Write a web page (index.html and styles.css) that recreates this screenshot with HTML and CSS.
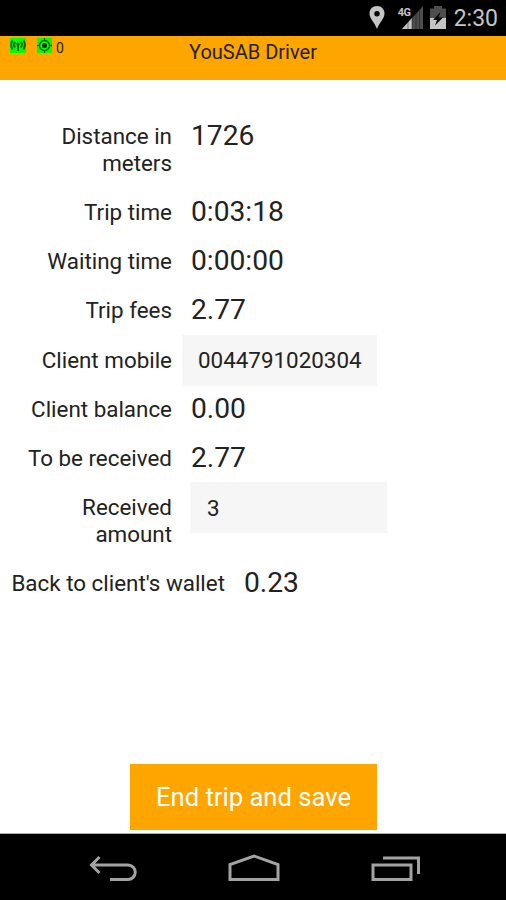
FILE: index.html
```
<!DOCTYPE html>
<html lang="en">
<head>
    <meta charset="UTF-8">
    <meta name="viewport" content="width=device-width, initial-scale=1.0">
    <title>YouSAB Driver</title>
    <link rel="stylesheet" href="styles.css">
</head>
<body>
    <div class="status-bar">
        <svg class="icon-pin" width="16" height="23" viewBox="0 0 16 23">
            <path fill="#c4c4c4" fill-rule="evenodd" d="M8 0C3.600 0 .5 3.200.5 7.400.5 12.500 6 17 8 23c2-6 7.500-10.500 7.500-15.600C15.500 3.200 12.400 0 8 0zm0 5a2.700 2.700 0 1 1 0 5.400A2.700 2.700 0 0 1 8 5z"/>
        </svg>
        <div class="signal">
            <span class="network">4G</span>
            <svg width="21" height="23" viewBox="0 0 21 23">
                <path fill="#4d4d4d" d="M21 0v23H0z"/>
                <path fill="#c4c4c4" d="M10 12v11H0z"/>
                <path stroke="#000" stroke-opacity=".4" d="M6 15v8M10 11v12M14 7v16M17.500 4v19"/>
            </svg>
        </div>
        <svg class="icon-battery" width="16" height="23" viewBox="0 0 16 23">
            <path fill="#4d4d4d" d="M4 0h8v2.500h4V12H0V2.500h4z"/>
            <path fill="#c4c4c4" d="M0 12h16v11H0z"/>
            <path fill="#000" d="M10.500 6L3 14h4l-2 5.500L13 11.500H8.500z"/>
        </svg>
        <span class="clock">2:30</span>
    </div>

    <header class="app-bar">
        <div class="indicators">
            <svg width="16" height="15" viewBox="0 0 16 15">
                <path fill="#0f0" d="M0 0h16v15H0z"/>
                <path fill="none" stroke="#0a6a0a" stroke-width="2" d="M2.500 2.500Q-.2 6.500 2.500 11.500M5 4Q3.200 6.500 5 9.500M13.500 2.500q2.700 4 0 9M11 4Q12.800 6.500 11 9.500M8 6v7"/>
                <circle cx="8" cy="6" r="1.600" fill="#064d06"/>
            </svg>
            <svg width="15" height="15" viewBox="0 0 15 15">
                <path fill="#0f0" d="M0 0h15v15H0z"/>
                <circle cx="7.500" cy="7.500" r="5" fill="none" stroke="#0a6a0a" stroke-width="1.300"/>
                <circle cx="7.500" cy="7.500" r="2.500" fill="#032503"/>
                <path stroke="#0a6a0a" stroke-width="1.300" d="M7.500 0v3M7.500 12v3M0 7.500h3M12 7.500h3"/>
            </svg>
            <span class="count">0</span>
        </div>
        <h1>YouSAB Driver</h1>
    </header>

    <main class="trip">
        <div class="row tall">
            <span class="label">Distance in meters</span>
            <span class="value">1726</span>
        </div>
        <div class="row">
            <span class="label">Trip time</span>
            <span class="value">0:03:18</span>
        </div>
        <div class="row">
            <span class="label">Waiting time</span>
            <span class="value">0:00:00</span>
        </div>
        <div class="row">
            <span class="label">Trip fees</span>
            <span class="value">2.77</span>
        </div>
        <div class="row">
            <label class="label" for="mobile">Client mobile</label>
            <input class="field mobile" type="text" id="mobile" value="0044791020304">
        </div>
        <div class="row">
            <span class="label">Client balance</span>
            <span class="value">0.00</span>
        </div>
        <div class="row">
            <span class="label">To be received</span>
            <span class="value">2.77</span>
        </div>
        <div class="row tall">
            <label class="label" for="received">Received amount</label>
            <input class="field received" type="text" id="received" value="3">
        </div>
        <div class="row">
            <span class="label wide">Back to client's wallet</span>
            <span class="value">0.23</span>
        </div>
        <button class="save">End trip and save</button>
    </main>

    <nav class="nav-bar">
        <svg width="48" height="28" viewBox="0 0 48 28" fill="none" stroke="#a3a3a3" stroke-width="3">
            <path d="M10.500 3L2.500 11l8 8M3 11h36a7 7 0 0 1 0 14.500H21"/>
        </svg>
        <svg width="52" height="28" viewBox="0 0 52 28" fill="none" stroke="#a3a3a3" stroke-width="3">
            <path d="M2 25.500V10.500L26 2l24 8.500v15z"/>
        </svg>
        <svg width="50" height="28" viewBox="0 0 50 28" fill="none" stroke="#a3a3a3" stroke-width="3">
            <path d="M2 11h38v14.500H2zM12 4h35.500v16"/>
        </svg>
    </nav>
</body>
</html>
```

FILE: styles.css
```
* {
    box-sizing: border-box;
}
body {
    font-family: Roboto, sans-serif;
    margin: 0;
    height: 900px;
    display: flex;
    flex-direction: column;
    background-color: #fff;
    color: #222;
    overflow: hidden;
}
.status-bar {
    height: 36px;
    padding: 6px 8px 0 0;
    display: flex;
    justify-content: flex-end;
    align-items: flex-start;
    background: #000;
    color: #c4c4c4;
}
.icon-pin {
    margin-right: 13px;
}
.signal {
    position: relative;
    width: 25px;
    height: 23px;
    padding-left: 4px;
    margin-right: 7px;
}
.network {
    position: absolute;
    left: 0;
    top: 1px;
    font-size: 11px;
    line-height: 11px;
    font-weight: 700;
    letter-spacing: -0.5px;
}
.icon-battery {
    margin-right: 8px;
}
.clock {
    font-size: 23px;
    line-height: 26px;
}
.app-bar {
    position: relative;
    height: 44px;
    background: #ffa500;
}
.app-bar h1 {
    margin: 0;
    padding-top: 4px;
    font-size: 20px;
    line-height: 24px;
    font-weight: 400;
    text-align: center;
}
.indicators {
    position: absolute;
    left: 10px;
    top: 2px;
    display: flex;
    gap: 11px;
}
.count {
    margin-left: -7px;
    font-size: 14px;
    line-height: 20px;
}
.trip {
    height: 754px;
    padding-top: 43px;
    border-bottom: 1px solid #aaa;
    display: flex;
    flex-direction: column;
}
.row {
    height: 49.2px;
    display: flex;
    align-items: flex-start;
}
.row.tall {
    height: 76px;
}
.label {
    width: 172px;
    padding-left: 20px;
    font-size: 22.4px;
    line-height: 27px;
    text-align: right;
}
.label.wide {
    width: 225px;
    padding-left: 0;
}
.value {
    margin-left: 19px;
    font-size: 28.2px;
    line-height: 25px;
}
.field {
    height: 51px;
    margin-top: -12px;
    border: none;
    background: #f6f6f6;
    color: #222;
    font-family: inherit;
    font-size: 22.4px;
}
.field.mobile {
    width: 195px;
    margin-left: 10px;
    padding: 0 14px 0 16px;
}
.field.received {
    width: 197px;
    margin-left: 18px;
    padding: 0 17px;
}
.save {
    width: 247px;
    height: 66px;
    margin: auto 0 3px 130px;
    border: none;
    background: #ffa500;
    color: #fff;
    font-family: inherit;
    font-size: 25.6px;
}
.nav-bar {
    height: 66px;
    padding: 20px 85px 0 89px;
    display: flex;
    justify-content: space-between;
    background: #000;
}
```
